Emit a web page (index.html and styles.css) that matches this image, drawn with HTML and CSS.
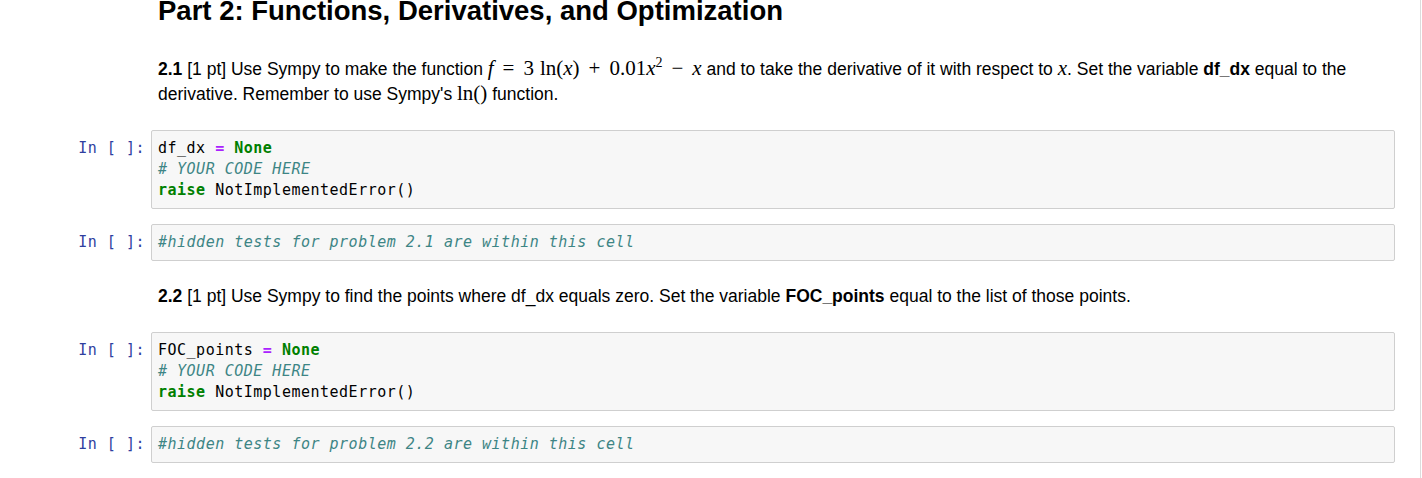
FILE: index.html
```html
<!DOCTYPE html>
<html>
<head>
<meta charset="utf-8">
<link rel="stylesheet" href="styles.css">
</head>
<body>
<div class="notebook">
  <div class="row">
    <div class="prompt"></div>
    <div class="md">
      <h2 class="title">Part 2: Functions, Derivatives, and Optimization</h2>
    </div>
  </div>

  <div class="row para1">
    <div class="prompt"></div>
    <div class="md">
      <p><b>2.1</b> [1 pt] Use Sympy to make the function <span class="math"><i>f</i><span class="op">=</span>3<span class="thin"></span>ln(<i>x</i>)<span class="op">+</span>0.01<i>x</i><sup>2</sup><span class="op">−</span><i>x</i></span> and to take the derivative of it with respect to <span class="math"><i>x</i></span>. Set the variable <b>df_dx</b> equal to the derivative. Remember to use Sympy's <span class="math">ln()</span> function.</p>
    </div>
  </div>

  <div class="row code-row first">
    <div class="prompt">In&nbsp;[&nbsp;]:</div>
    <div class="cell"><pre>df_dx <span class="o">=</span> <span class="k">None</span>
<span class="c"># YOUR CODE HERE</span>
<span class="k">raise</span> NotImplementedError()</pre></div>
  </div>

  <div class="row code-row">
    <div class="prompt">In&nbsp;[&nbsp;]:</div>
    <div class="cell"><pre><span class="c">#hidden tests for problem 2.1 are within this cell</span></pre></div>
  </div>

  <div class="row para2">
    <div class="prompt"></div>
    <div class="md">
      <p><b>2.2</b> [1 pt] Use Sympy to find the points where df_dx equals zero. Set the variable <b>FOC_points</b> equal to the list of those points.</p>
    </div>
  </div>

  <div class="row code-row first">
    <div class="prompt">In&nbsp;[&nbsp;]:</div>
    <div class="cell"><pre>FOC_points <span class="o">=</span> <span class="k">None</span>
<span class="c"># YOUR CODE HERE</span>
<span class="k">raise</span> NotImplementedError()</pre></div>
  </div>

  <div class="row code-row">
    <div class="prompt">In&nbsp;[&nbsp;]:</div>
    <div class="cell"><pre><span class="c">#hidden tests for problem 2.2 are within this cell</span></pre></div>
  </div>
</div>
</body>
</html>
```
FILE: styles.css
```css
html, body {
  margin: 0;
  padding: 0;
  background: #ffffff;
}
body {
  font-family: "Liberation Sans", Arial, sans-serif;
  color: #000000;
  overflow: hidden;
}
.notebook {
  width: 1421px;
  border-right: 1px solid #dcdcdc;
  min-height: 478px;
  padding-right: 25px;
  box-sizing: border-box;
}
.row {
  display: grid;
  grid-template-columns: 151px 1fr;
}
.prompt {
  font-family: "DejaVu Sans Mono", monospace;
  font-size: 15px;
  letter-spacing: 0.5px;
  line-height: 21px;
  color: #303f9f;
  text-align: right;
  padding: 8px 6px 0 0;
  white-space: nowrap;
}
.md {
  padding-left: 7px;
}
.title {
  margin: -2px 0 0 0;
  font-size: 27.5px;
  line-height: 26px;
  font-weight: bold;
}
.md p {
  margin: 0;
  font-size: 17.5px;
  line-height: 24px;
}
.para1 {
  margin-top: 32px;
}
.para2 {
  margin-top: 23px;
}
.code-row {
  margin-top: 15px;
}
.code-row.first {
  margin-top: 24px;
}
.cell {
  background: #f7f7f7;
  border: 1px solid #cfcfcf;
  border-radius: 2px;
  padding: 7px 6px 7px 6px;
}
.cell pre {
  margin: 0;
  font-family: "DejaVu Sans Mono", monospace;
  font-size: 15px;
  letter-spacing: 0.5px;
  line-height: 21px;
  color: #000000;
}
.k {
  color: #008000;
  font-weight: bold;
}
.o {
  color: #aa22ff;
  font-weight: bold;
}
.c {
  color: #3d8585;
  font-style: italic;
}
.math {
  font-family: "Liberation Serif", "Times New Roman", serif;
  font-size: 21px;
  white-space: nowrap;
}
.math i {
  font-style: italic;
}
.math sup {
  font-size: 14px;
  line-height: 0;
  vertical-align: 8px;
}
.op {
  padding: 0 9px;
}
.thin {
  display: inline-block;
  width: 6px;
}
```
